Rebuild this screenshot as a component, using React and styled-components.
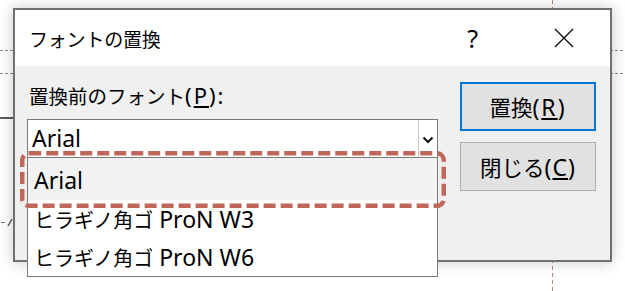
import React from "react";
import styled, { createGlobalStyle } from "styled-components";

const GlobalStyle = createGlobalStyle`
  html, body {
    margin: 0;
    padding: 0;
    background: #fff;
  }
  body {
    font-family: "Noto Sans CJK JP", "Noto Sans", sans-serif;
    color: #000;
  }
`;

// each entry: [japanese part, latin part]
const FONTS = [
  ["", "Arial"],
  ["ヒラギノ角ゴ", " ProN W3"],
  ["ヒラギノ角ゴ", " ProN W6"],
];

const Key = ({ children }) => <u>{children}</u>;

export default function App() {
  return (
    <>
      <GlobalStyle />
      <Desktop>
        <SlideGuides width="625" height="291" viewBox="0 0 625 291">
          <line x1="0" y1="50.5" x2="625" y2="50.5" stroke="#8a8a8a" strokeDasharray="3 2" />
          <line x1="0" y1="73.5" x2="625" y2="73.5" stroke="#8a8a8a" strokeDasharray="3 2" />
          <line x1="0" y1="118" x2="14" y2="118" stroke="#5a5a5a" strokeWidth="2" />
          <line x1="552.5" y1="0" x2="552.5" y2="291" stroke="#b08a7c" strokeDasharray="4 3" />
          <line x1="1" y1="222.5" x2="5" y2="222.5" stroke="#7a7a7a" />
          <line x1="8" y1="226" x2="12" y2="219" stroke="#5a5a5a" strokeWidth="1.5" />
        </SlideGuides>

        <Dialog>
          <TitleBar>
            <Title>フォントの置換</Title>
            <TitleActions>
              <HelpMark>?</HelpMark>
              <CloseIcon width="20" height="20" viewBox="0 0 20 20">
                <path d="M1 1 L19 19 M19 1 L1 19" stroke="#111" strokeWidth="1.4" fill="none" />
              </CloseIcon>
            </TitleActions>
          </TitleBar>

          <Body>
            <Field>
              <Label>
                置換前のフォント
                <Latin $size={22} $spacing={2}>
                  (<Key>P</Key>):
                </Latin>
              </Label>
              <Combo>
                <ComboValue>Arial</ComboValue>
                <ComboArrow>
                  <svg width="12" height="8" viewBox="0 0 12 8">
                    <path d="M1.5 1.5 L6 6 L10.5 1.5" stroke="#111" strokeWidth="2" fill="none" />
                  </svg>
                </ComboArrow>
              </Combo>
            </Field>

            <Buttons>
              <Button $primary>
                置換
                <Latin $size={23} $spacing={2}>
                  (<Key>R</Key>)
                </Latin>
              </Button>
              <Button>
                閉じる
                <Latin $size={23} $spacing={1}>
                  (<Key>C</Key>)
                </Latin>
              </Button>
            </Buttons>
          </Body>
        </Dialog>

        <DropList>
          {FONTS.map(([jp, latin], i) => (
            <Option key={jp + latin} $selected={i === 0}>
              {jp}
              <Latin $size={23}>{latin}</Latin>
            </Option>
          ))}
        </DropList>

        <Highlight width="426" height="57" viewBox="0 0 426 57">
          <rect
            x="2.25"
            y="2.25"
            width="421.5"
            height="52.5"
            rx="7"
            fill="none"
            stroke="#c0675a"
            strokeWidth="4.5"
            strokeDasharray="12 5"
          />
        </Highlight>
      </Desktop>
    </>
  );
}

const Desktop = styled.div`
  position: relative;
  width: 625px;
  height: 291px;
  overflow: hidden;
  background: #fff;
`;

const SlideGuides = styled.svg`
  position: absolute;
  inset: 0;
`;

const Latin = styled.span`
  font-family: "Noto Sans", sans-serif;
  font-size: ${(p) => p.$size}px;
  letter-spacing: ${(p) => p.$spacing || 0}px;
  white-space: pre;
`;

const Dialog = styled.div`
  position: absolute;
  left: 13px;
  top: 8px;
  width: 599px;
  height: 254px;
  box-sizing: border-box;
  border: 2px solid #707070;
  background: #f0f0f0;
  box-shadow: 0 0 14px rgba(0, 0, 0, 0.22);
  display: flex;
  flex-direction: column;
`;

const TitleBar = styled.div`
  height: 56px;
  background: #fff;
  display: flex;
  align-items: center;
  justify-content: space-between;
  padding-left: 14px;
  padding-right: 36px;
`;

const Title = styled.div`
  font-size: 19px;
  letter-spacing: -0.2px;
`;

const TitleActions = styled.div`
  display: flex;
  align-items: center;
  gap: 76px;
`;

const HelpMark = styled.span`
  font-family: "Noto Sans", sans-serif;
  font-size: 25px;
  line-height: 1;
`;

const CloseIcon = styled.svg`
  display: block;
`;

const Body = styled.div`
  flex: 1;
  display: flex;
  justify-content: space-between;
  padding: 17px 14px 0 12px;
`;

const Field = styled.div`
  display: flex;
  flex-direction: column;
  width: 411px;
`;

const Label = styled.div`
  font-size: 19.5px;
  line-height: 24px;
  padding-left: 2px;
  margin-bottom: 11px;
  white-space: nowrap;
`;

const Combo = styled.div`
  height: 39px;
  box-sizing: border-box;
  border: 1px solid #7a7a7a;
  background: #fff;
  display: flex;
`;

const ComboValue = styled.div`
  flex: 1;
  font-family: "Noto Sans", sans-serif;
  font-size: 23px;
  line-height: 37px;
  padding-left: 4px;
`;

const ComboArrow = styled.div`
  width: 18px;
  border-left: 1px solid #c8c8c8;
  display: flex;
  align-items: center;
  justify-content: center;
  padding-top: 2px;
`;

const Buttons = styled.div`
  display: flex;
  flex-direction: column;
  gap: 11px;
  margin-top: -1px;
`;

const Button = styled.div`
  width: 136px;
  height: 49px;
  box-sizing: border-box;
  background: #e1e1e1;
  border: ${(p) => (p.$primary ? "2px solid #0078d7" : "1px solid #adadad")};
  display: flex;
  align-items: center;
  justify-content: center;
  font-size: 21.5px;
  white-space: nowrap;
`;

const DropList = styled.div`
  position: absolute;
  left: 27px;
  top: 157px;
  width: 411px;
  height: 120px;
  box-sizing: border-box;
  border: 1px solid #7a7a7a;
  background: #fff;
  display: flex;
  flex-direction: column;
`;

const Option = styled.div`
  height: 38px;
  font-size: 20px;
  line-height: 38px;
  padding-left: 6px;
  white-space: nowrap;
  background: ${(p) => (p.$selected ? "#f2f2f2" : "#fff")};
  &:first-child {
    height: 42px;
    line-height: 44px;
  }
`;

const Highlight = styled.svg`
  position: absolute;
  left: 20px;
  top: 151px;
`;
